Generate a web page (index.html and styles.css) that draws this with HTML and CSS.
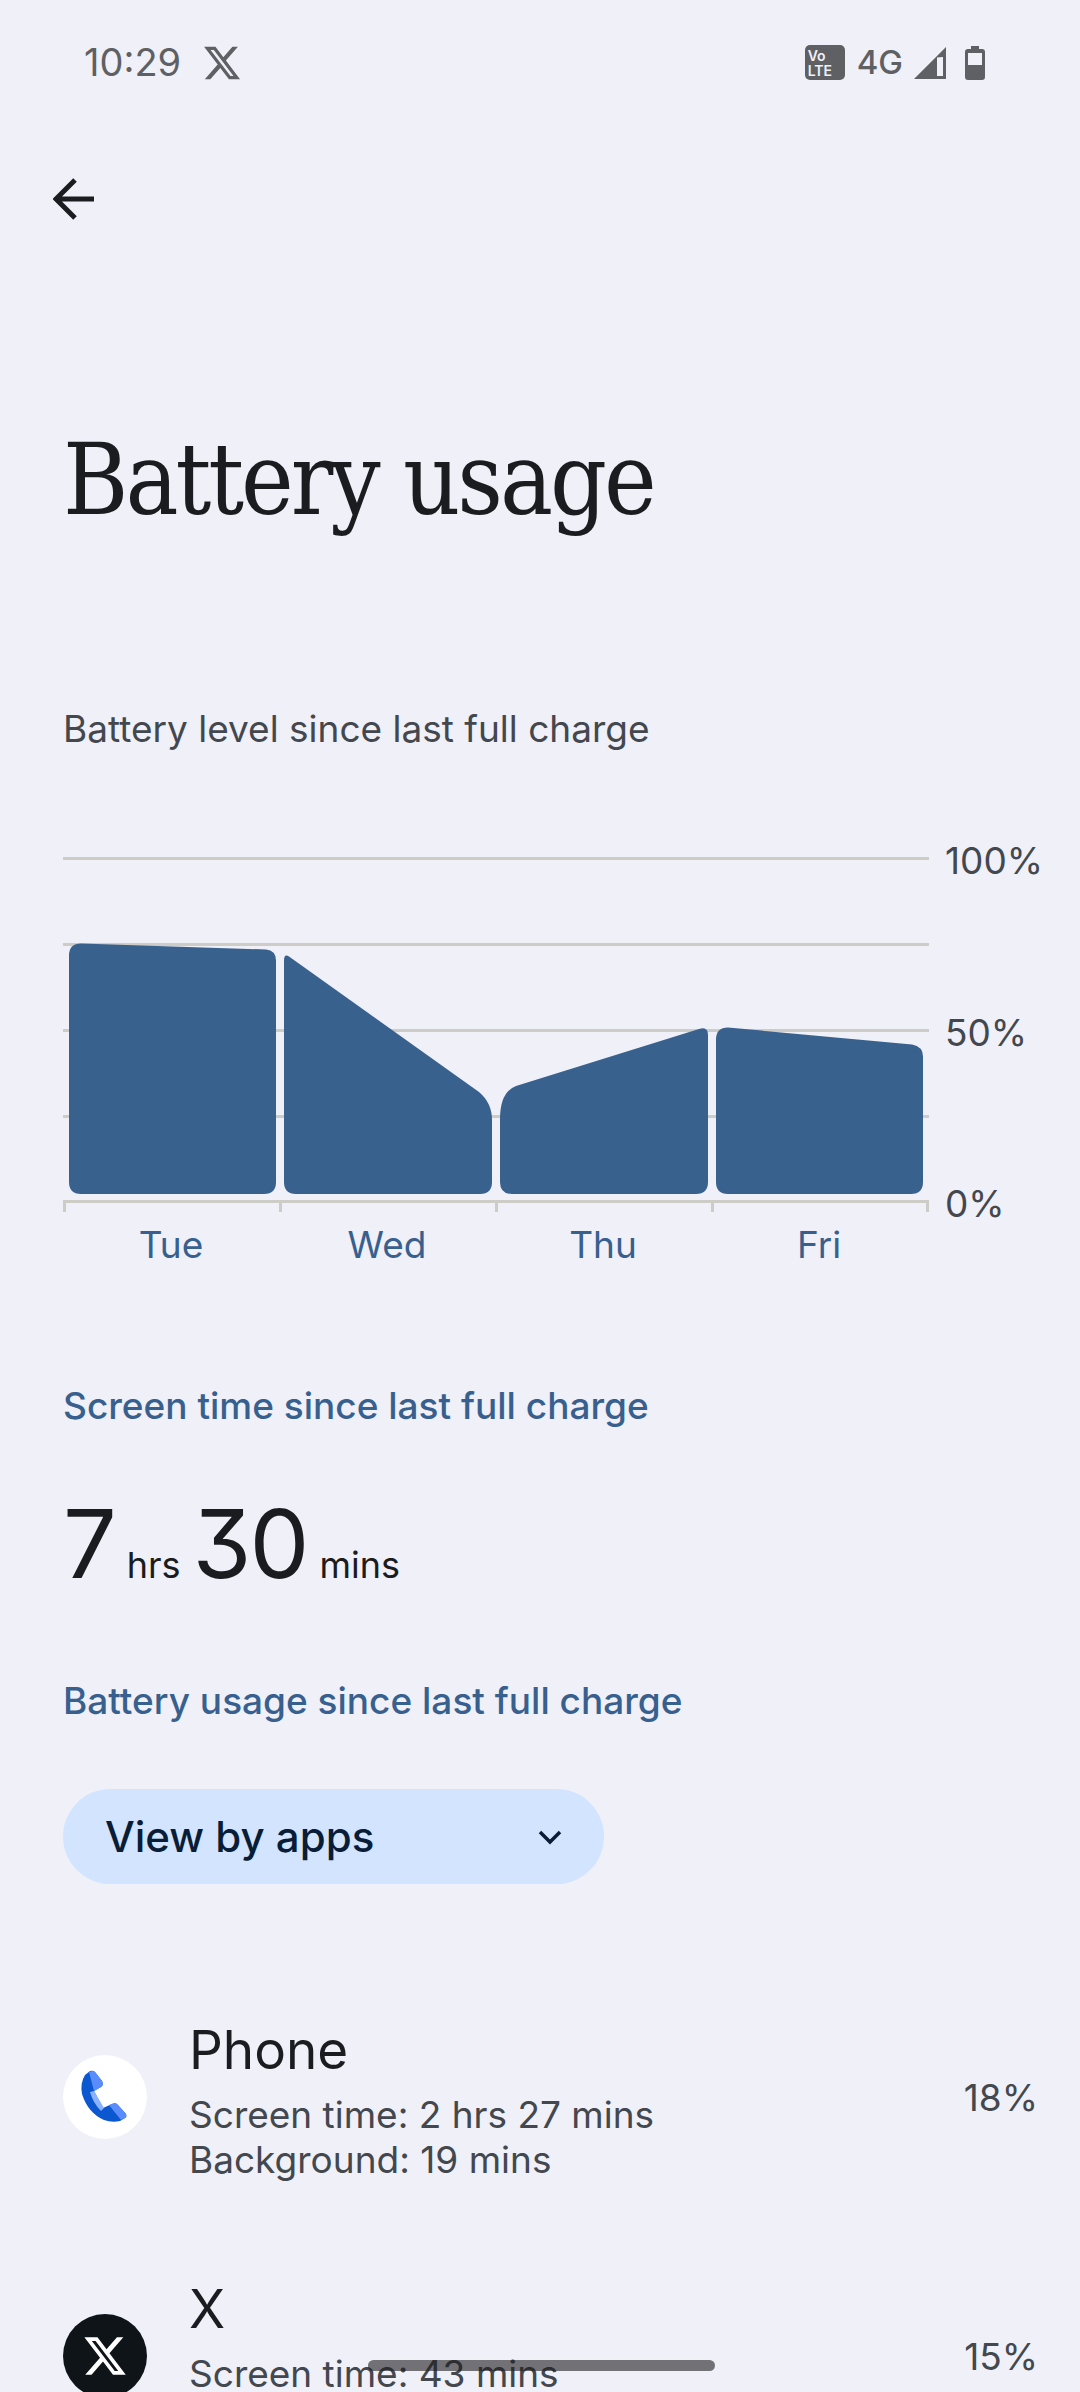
FILE: index.html
```html
<!DOCTYPE html>
<html lang="en">
<head>
    <meta charset="UTF-8">
    <meta name="viewport" content="width=device-width, initial-scale=1.0">
    <title>Battery usage</title>
    <link rel="stylesheet" href="styles.css">
</head>
<body>
    <div class="status-bar">
        <div class="status-left">
            <span class="clock">10:29</span>
            <svg class="status-x" viewBox="0 0 24 24"><path d="M18.244 2.25h3.308l-7.227 8.26 8.502 11.24H16.17l-5.214-6.817L4.99 21.75H1.68l7.73-8.835L1.254 2.25H8.08l4.713 6.231zm-1.161 17.52h1.833L7.084 4.126H5.117z"/></svg>
        </div>
        <div class="status-right">
            <div class="volte"><span>Vo</span><span>LTE</span></div>
            <span class="network">4G</span>
            <svg class="signal" viewBox="0 0 32 32"><path fill-rule="evenodd" d="M32 0V32H0ZM23 10.500L23 29H29V10Z"/></svg>
            <svg class="battery" viewBox="0 0 20 34"><path fill-rule="evenodd" d="M6 0h8v3h3a3 3 0 0 1 3 3v25a3 3 0 0 1-3 3H3a3 3 0 0 1-3-3V6a3 3 0 0 1 3-3h3ZM3 7V19H17V7Z"/></svg>
        </div>
    </div>

    <button class="back-button">
        <svg viewBox="0 0 42 42"><path d="M41 21H3M22 2L3 21l19 19" fill="none" stroke="#1a1c20" stroke-width="5"/></svg>
    </button>

    <h1 class="page-title">Battery usage</h1>
    <p class="chart-caption">Battery level since last full charge</p>

    <div class="chart">
        <svg class="chart-plot" viewBox="0 0 868 355">
            <g fill="#cdccc6">
                <rect x="0" y="0" width="866" height="3"/>
                <rect x="0" y="86" width="866" height="3"/>
                <rect x="0" y="172" width="866" height="3"/>
                <rect x="0" y="258" width="866" height="3"/>
                <rect x="0" y="343" width="866" height="3"/>
                <rect x="0" y="343" width="3" height="12"/>
                <rect x="216" y="343" width="3" height="12"/>
                <rect x="432" y="343" width="3" height="12"/>
                <rect x="648" y="343" width="3" height="12"/>
                <rect x="863" y="343" width="3" height="12"/>
            </g>
            <g fill="#38618e">
                <path d="M6 98.500Q6 86.500 18 86.500L203 92.500Q213 93.500 213 103.500V325Q213 337 201 337H18Q6 337 6 325Z"/>
                <path d="M221 103.500Q221 96.500 226 99.500L416 235Q429 246 429 263V325Q429 337 417 337H233Q221 337 221 325Z"/>
                <path d="M437 262Q437 235 453 229L636 172Q645 169 645 178V325Q645 337 633 337H449Q437 337 437 325Z"/>
                <path d="M653 182.500Q653 170.500 665 170.500L849 187.500Q860 189.500 860 199.500V325Q860 337 848 337H665Q653 337 653 325Z"/>
            </g>
        </svg>
        <div class="chart-scale">
            <span>100%</span>
            <span>50%</span>
            <span>0%</span>
        </div>
        <div class="chart-days">
            <span>Tue</span>
            <span>Wed</span>
            <span>Thu</span>
            <span>Fri</span>
        </div>
    </div>

    <h2 class="section-label screen-label">Screen time since last full charge</h2>
    <div class="screen-time">
        <span class="big-num">7</span><span class="unit">hrs</span><span class="big-num">30</span><span class="unit">mins</span>
    </div>
    <h2 class="section-label usage-label">Battery usage since last full charge</h2>

    <div class="view-select">
        <span>View by apps</span>
        <svg viewBox="0 0 24 24"><path d="M2 7l10 10L22 7" fill="none" stroke="#0a1d36" stroke-width="3.500"/></svg>
    </div>

    <div class="app-list">
        <div class="app-row">
            <div class="app-icon phone-icon">
                <svg viewBox="0 0 84 84">
                    <path d="M22 20L27 16Q30 15 32 17L39 26Q41 30 38 32L31 36L40 53L49 49Q53 47 55 50L63 59Q64 62 62 63L57 66Q49 68 41 65Q25 58 19 39Q17 28 22 20Z" fill="#0b57d0"/>
                    <path d="M26 17Q30 15 32 17L39 26Q41 30 38 32L31 36L26 17Z" fill="#5a8dfb"/>
                    <path d="M46 50L49 49Q53 47 55 50L63 59Q64 62 62 63L58 65Z" fill="#5a8dfb"/>
                    <path d="M27 37L31 36L41 53L38 56Q30 48 27 37Z" fill="#8ab2ff"/>
                </svg>
            </div>
            <div class="app-info">
                <div class="app-name">Phone</div>
                <div class="app-detail">Screen time: 2 hrs 27 mins</div>
                <div class="app-detail">Background: 19 mins</div>
            </div>
            <div class="app-percent">18%</div>
        </div>
        <div class="app-row">
            <div class="app-icon x-icon">
                <svg viewBox="0 0 24 24"><path d="M18.244 2.25h3.308l-7.227 8.26 8.502 11.24H16.17l-5.214-6.817L4.99 21.75H1.68l7.73-8.835L1.254 2.25H8.08l4.713 6.231zm-1.161 17.52h1.833L7.084 4.126H5.117z"/></svg>
            </div>
            <div class="app-info">
                <div class="app-name">X</div>
                <div class="app-detail">Screen time: 43 mins</div>
            </div>
            <div class="app-percent">15%</div>
        </div>
    </div>

    <div class="home-pill"></div>
</body>
</html>
```

FILE: styles.css
```css
*{
    margin: 0;
    padding: 0;
    box-sizing: border-box;
}
html, body{
    width: 1080px;
    height: 2392px;
    overflow: hidden;
}
body{
    background-color: #eff0f8;
    color: #1a1c20;
    font-family: Inter, "Noto Sans", sans-serif;
    position: relative;
}

/* status bar */
.status-bar{
    height: 126px;
    padding: 45px 95px 0 84px;
    display: flex;
    justify-content: space-between;
    align-items: flex-start;
    color: #5f6063;
}
.status-left{
    display: flex;
    align-items: center;
    gap: 21px;
    height: 35px;
}
.clock{
    font-size: 38px;
    line-height: 35px;
}
.status-x{
    width: 40px;
    height: 40px;
    fill: #5f6063;
}
.status-right{
    display: flex;
    align-items: center;
    height: 35px;
}
.volte{
    width: 40px;
    height: 35px;
    background-color: #5f6063;
    border-radius: 5px;
    color: #eff0f8;
    font-size: 14px;
    font-weight: 600;
    line-height: 15px;
    padding: 3px 0 0 3px;
    display: flex;
    flex-direction: column;
    margin-right: 12px;
}
.network{
    font-size: 33px;
    font-weight: 500;
    line-height: 35px;
    margin-right: 11px;
}
.signal{
    width: 32px;
    height: 32px;
    fill: #5f6063;
    margin-right: 19px;
}
.battery{
    width: 20px;
    height: 34px;
    fill: #5f6063;
}

.back-button{
    display: block;
    width: 42px;
    height: 42px;
    margin-left: 53px;
    margin-top: 52px;
    background: none;
    border: none;
}
.back-button svg{
    display: block;
    width: 42px;
    height: 42px;
}

.page-title{
    font-family: "DejaVu Serif Condensed", "DejaVu Serif", serif;
    font-weight: 400;
    font-size: 99px;
    line-height: 130px;
    letter-spacing: -3px;
    margin: 195px 0 0 63px;
}
.chart-caption{
    font-size: 37px;
    line-height: 44px;
    color: #43474e;
    margin: 162px 0 0 63px;
}

/* chart */
.chart{
    margin: 106px 0 0 63px;
    display: grid;
    grid-template-columns: 882px auto;
    grid-template-rows: 355px auto;
}
.chart-plot{
    width: 868px;
    height: 355px;
    display: block;
}
.chart-scale{
    display: flex;
    flex-direction: column;
    justify-content: space-between;
    height: 387px;
    margin-top: -18px;
    font-size: 37px;
    line-height: 44px;
    color: #43474e;
}
.chart-days{
    display: grid;
    grid-template-columns: repeat(4, 216px);
    width: 866px;
    margin-top: 11px;
    text-align: center;
    font-size: 37px;
    line-height: 44px;
    color: #38608f;
}

.section-label{
    font-size: 37px;
    font-weight: 500;
    line-height: 44px;
    color: #38608f;
    margin-left: 63px;
}
.screen-label{
    margin-top: 117px;
}
.screen-time{
    display: flex;
    align-items: baseline;
    margin: 62px 0 0 63px;
    height: 108px;
}
.big-num{
    font-size: 95px;
    line-height: 108px;
    letter-spacing: -2px;
    font-feature-settings: "cv09";
}
.unit{
    font-size: 36px;
    margin: 0 12px;
}
.usage-label{
    margin-top: 81px;
}

.view-select{
    width: 541px;
    height: 95px;
    margin: 66px 0 0 63px;
    padding: 0 42px;
    background-color: #d2e4ff;
    border-radius: 48px;
    display: flex;
    align-items: center;
    justify-content: space-between;
    font-size: 42px;
    font-weight: 500;
    color: #0a1d36;
}
.view-select svg{
    width: 24px;
    height: 24px;
}

/* app list */
.app-list{
    margin-top: 104px;
    display: flex;
    flex-direction: column;
    gap: 42px;
}
.app-row{
    display: flex;
    align-items: center;
    height: 217px;
    padding: 0 42px 0 63px;
}
.app-icon{
    width: 84px;
    height: 84px;
    border-radius: 50%;
    margin-right: 42px;
    flex-shrink: 0;
    display: flex;
    align-items: center;
    justify-content: center;
}
.phone-icon{
    background-color: #ffffff;
}
.x-icon{
    background-color: #0f1419;
}
.x-icon svg{
    width: 46px;
    height: 46px;
    fill: #ffffff;
}
.app-info{
    flex: 1;
    align-self: flex-start;
    padding-top: 30px;
}
.app-name{
    font-size: 53px;
    line-height: 64px;
    margin-bottom: 10px;
}
.app-detail{
    font-size: 37px;
    line-height: 45px;
    color: #43474e;
}
.app-percent{
    font-size: 37px;
    line-height: 44px;
    color: #43474e;
    margin-top: 3px;
}

.home-pill{
    position: absolute;
    left: 368px;
    top: 2360px;
    width: 347px;
    height: 11px;
    border-radius: 6px;
    background-color: rgba(30, 30, 32, 0.6);
}
```
